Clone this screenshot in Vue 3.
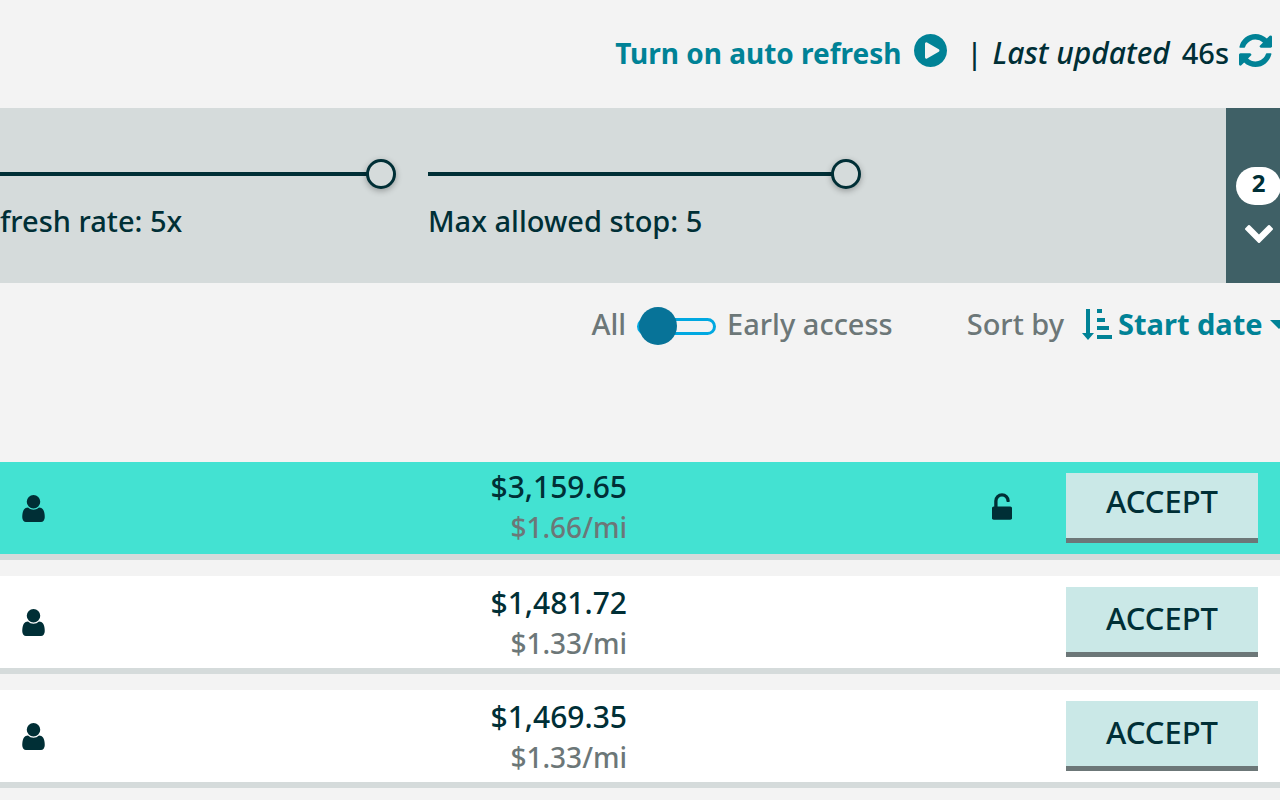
<script setup>
import { ref } from 'vue'

const refreshRate = ref(5)
const maxStops = ref(5)
const earlyAccess = ref(false)
const sortKey = ref('start')

const loads = [
  { id: 1, price: '$3,159.65', rate: '$1.66/mi', highlighted: true },
  { id: 2, price: '$1,481.72', rate: '$1.33/mi', highlighted: false },
  { id: 3, price: '$1,469.35', rate: '$1.33/mi', highlighted: false },
]
</script>

<template>
  <main class="board">
    <header class="topbar">
      <button type="button" class="auto">
        <span>Turn on auto refresh</span>
        <svg class="round-icon" viewBox="128 128 1536 1536" aria-hidden="true">
          <path d="M896 128q209 0 385.5 103t279.5 279.5 103 385.5-103 385.5-279.5 279.5-385.5 103-385.5-103-279.5-279.5-103-385.5 103-385.5 279.5-279.5 385.5-103zm384 823q32-18 32-55t-32-55l-544-320q-31-19-64-1-32 19-32 55v640q0 36 32 55 16 8 32 8 17 0 32-9z" />
        </svg>
      </button>
      <span class="divider">|</span>
      <em class="updated">Last updated</em>
      <span class="age">46s</span>
      <button type="button" class="reload" aria-label="Refresh">
        <svg class="round-icon" viewBox="128 128 1536 1536" aria-hidden="true">
          <path d="M1639 1056q0 5-1 7-64 268-268 434.500t-478 166.500q-146 0-282.500-55t-243.500-157l-129 129q-19 19-45 19t-45-19-19-45v-448q0-26 19-45t45-19h448q26 0 45 19t19 45-19 45l-137 137q71 66 161 102t187 36q134 0 250-65t186-179q11-17 53-117 8-23 30-23h192q13 0 22.500 9.500t9.500 22.500zm25-800v448q0 26-19 45t-45 19h-448q-26 0-45-19t-19-45 19-45l138-138q-148-137-349-137-134 0-250 65t-186 179q-11 17-53 117-8 23-30 23h-199q-13 0-22.500-9.500t-9.500-22.500v-7q65-268 270-434.500t480-166.500q146 0 284 55.500t245 156.500l130-129q19-19 45-19t45 19 19 45z" />
        </svg>
      </button>
    </header>

    <section class="filters">
      <div class="sliders">
        <div class="field">
          <input id="rate" v-model="refreshRate" type="range" min="1" max="5" />
          <label for="rate">fresh rate: {{ refreshRate }}x</label>
        </div>
        <div class="field">
          <input id="stops" v-model="maxStops" type="range" min="1" max="5" />
          <label for="stops">Max allowed stop: {{ maxStops }}</label>
        </div>
      </div>
      <button type="button" class="expand">
        <span class="badge">2</span>
        <svg class="chevron" viewBox="90 533 1612 1035" aria-hidden="true">
          <path d="M1683 808l-742 741q-19 19-45 19t-45-19l-742-741q-19-19-19-45.500t19-45.500l166-165q19-19 45-19t45 19l531 531 531-531q19-19 45-19t45 19l166 165q19 19 19 45.500t-19 45.500z" />
        </svg>
      </button>
    </section>

    <div class="toolbar">
      <div class="access">
        <label for="early">All</label>
        <input id="early" v-model="earlyAccess" class="switch" type="checkbox" />
        <label for="early">Early access</label>
      </div>
      <div class="sort">
        <label for="sort">Sort by</label>
        <svg class="sort-icon" viewBox="0 0 30 31" aria-hidden="true">
          <path d="M4 0h4v24h4l-6 7-6-7h4zM15 0h5v4h-5zM15 9h8v4h-8zM15 17h12v4H15zM15 26h15v4H15z" />
        </svg>
        <select id="sort" v-model="sortKey">
          <option value="start">Start date</option>
        </select>
        <svg class="caret" viewBox="0 0 18 9" aria-hidden="true">
          <path d="M0 0h18l-9 9z" />
        </svg>
      </div>
    </div>

    <ul class="loads">
      <li v-for="load in loads" :key="load.id" class="load" :class="{ highlighted: load.highlighted }">
        <svg class="user" viewBox="256 128 1280 1536" aria-hidden="true">
          <path d="M1536 1399q0 109-62.500 187t-150.500 78h-854q-88 0-150.500-78t-62.500-187q0-85 8.500-160.500t31.500-152 58.500-131 94-89 134.500-34.500q131 128 313 128t313-128q76 0 134.500 34.500t94 89 58.500 131 31.500 152 8.500 160.500zm-256-887q0 159-112.500 271.500t-271.500 112.500-271.500-112.500-112.500-271.500 112.500-271.500 271.500-112.500 271.500 112.500 112.500 271.500z" />
        </svg>
        <div class="pay">
          <div class="price">{{ load.price }}</div>
          <div class="per-mile">{{ load.rate }}</div>
        </div>
        <div class="lock">
          <svg v-if="load.highlighted" viewBox="320 0 1152 1536" aria-hidden="true">
            <path d="M1376 768q40 0 68 28t28 68v576q0 40-28 68t-68 28h-960q-40 0-68-28t-28-68v-576q0-40 28-68t68-28h32v-320q0-185 131.500-316.500t316.500-131.500 316.500 131.500 131.500 316.500q0 26-19 45t-45 19h-64q-26 0-45-19t-19-45q0-106-75-181t-181-75-181 75-75 181v320h736z" />
          </svg>
        </div>
        <button type="button" class="accept">ACCEPT</button>
      </li>
    </ul>
  </main>
</template>

<style>
body {
  margin: 0;
  background: #f3f3f3;
}
</style>

<style scoped>
.board {
  min-height: 100vh;
  max-height: 100vh;
  overflow: hidden;
  background: #f3f3f3;
  color: #002f36;
  font-family: "Noto Sans", "Open Sans", sans-serif;
  font-size: 29px;
  font-weight: 500;
  line-height: 40px;
}

svg {
  display: block;
  flex: none;
  fill: currentColor;
}

button,
select {
  margin: 0;
  padding: 0;
  border: 0;
  border-radius: 0;
  background: none;
  color: inherit;
  font: inherit;
  cursor: pointer;
}

.topbar {
  display: flex;
  justify-content: flex-end;
  align-items: center;
  height: 106px;
  padding: 0 8px 2px 0;
  white-space: nowrap;
}

.auto {
  display: flex;
  align-items: center;
  gap: 12px;
  color: #008296;
  font-size: 28px;
  font-weight: 700;
}

.round-icon {
  width: 33px;
  height: 33px;
  margin-bottom: 5px;
}

.divider {
  margin: 0 10px 0 20px;
}

.updated {
  margin-right: 12px;
  font-size: 30px;
}

.age {
  margin-right: 10px;
}

.reload {
  color: #008296;
}

.filters {
  display: flex;
  height: 175px;
  background: #d5dbdb;
}

.sliders {
  flex: 1;
  display: grid;
  grid-template-columns: 396fr 433fr 333fr;
  column-gap: 32px;
  align-content: start;
  padding-top: 51px;
}

.field {
  display: grid;
  gap: 12px;
  white-space: nowrap;
}

.field input {
  appearance: none;
  width: 100%;
  height: 30px;
  margin: 0;
  background: linear-gradient(#002f36, #002f36) left center / calc(100% - 28px) 4px no-repeat;
}

.field input::-webkit-slider-thumb {
  appearance: none;
  box-sizing: border-box;
  width: 30px;
  height: 30px;
  border: 3px solid #002f36;
  border-radius: 50%;
  background: #d5dbdb;
  box-shadow: 0 2px 6px rgba(0, 0, 0, 0.3);
}

.expand {
  display: flex;
  flex-direction: column;
  align-items: center;
  justify-content: flex-start;
  gap: 20px;
  width: 54px;
  padding: 59px 0 0 11px;
  background: #3f6066;
  color: #fff;
}

.badge {
  box-sizing: border-box;
  flex: none;
  width: 45px;
  height: 38px;
  padding-bottom: 6px;
  border-radius: 19px;
  background: #fff;
  color: #002f36;
  font-size: 24px;
  font-weight: 700;
  line-height: 32px;
}

.chevron {
  width: 28px;
  height: 18px;
}

.toolbar {
  display: flex;
  justify-content: flex-end;
  height: 84px;
  color: #6c7778;
  white-space: nowrap;
}

.access,
.sort {
  display: flex;
  align-items: center;
  height: 82px;
}

.access {
  gap: 11px;
  margin-right: 74px;
}

.switch {
  appearance: none;
  display: flex;
  align-items: center;
  width: 79px;
  height: 38px;
  margin: 4px 0 0;
  position: relative;
  cursor: pointer;
}

.switch::before {
  content: "";
  box-sizing: border-box;
  width: 100%;
  height: 17px;
  border: 3px solid #00a8e1;
  border-radius: 9px;
}

.switch::after {
  content: "";
  position: absolute;
  left: 2px;
  width: 38px;
  height: 38px;
  border-radius: 50%;
  background: #077398;
}

.switch:checked::after {
  left: 39px;
}

.sort-icon {
  width: 30px;
  height: 31px;
  margin: 0 6px 0 18px;
  color: #008296;
}

.sort select {
  appearance: none;
  color: #008296;
  font-size: 29px;
  font-weight: 700;
  line-height: 40px;
}

.caret {
  width: 18px;
  height: 9px;
  margin: 0 -8px 0 7px;
  color: #008296;
}

.loads {
  display: grid;
  gap: 16px;
  margin: 95px 0 0;
  padding: 0;
  list-style: none;
}

.load {
  display: grid;
  grid-template-columns: 23px 582fr 385fr 246px;
  align-items: center;
  height: 92px;
  padding: 0 22px;
  border-bottom: 6px solid #d5dbdb;
  background: #fff;
}

.load.highlighted {
  background: #43e2d2;
}

.user {
  width: 23px;
  height: 27px;
}

.pay {
  padding-top: 2px;
  text-align: right;
}

.price,
.per-mile {
  line-height: 41px;
}

.price {
  font-size: 30px;
}

.per-mile {
  color: #6c7778;
  font-size: 28px;
}

.highlighted .pay {
  padding: 0 0 2px;
}

.lock svg {
  width: 20px;
  height: 27px;
  margin: 0 0 4px auto;
}

.accept {
  justify-self: end;
  box-sizing: border-box;
  width: 192px;
  height: 70px;
  padding-bottom: 4px;
  border-bottom: 5px solid #6c7778;
  background: #cae8e7;
  font-size: 31px;
}

.highlighted .accept {
  padding-bottom: 9px;
}
</style>
